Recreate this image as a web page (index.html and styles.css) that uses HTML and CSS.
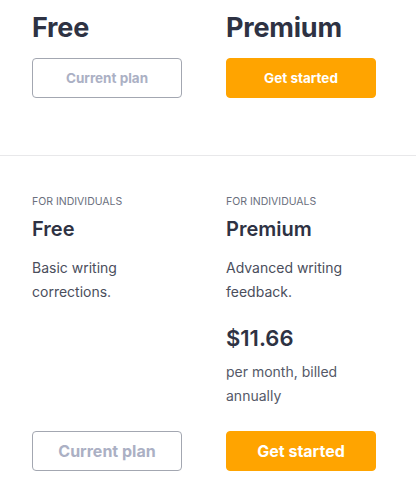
FILE: index.html
```html
<!DOCTYPE html>
<html lang="en">
<head>
<meta charset="utf-8">
<title>Plans</title>
<link rel="stylesheet" href="styles.css">
</head>
<body>
<section class="top">
  <div class="col">
    <h1 class="big-title">Free</h1>
    <button class="btn btn-outline btn-sm">Current plan</button>
  </div>
  <div class="col">
    <h1 class="big-title">Premium</h1>
    <button class="btn btn-primary btn-sm">Get started</button>
  </div>
</section>
<section class="plans">
  <div class="plan">
    <div class="label">FOR INDIVIDUALS</div>
    <h2 class="plan-title">Free</h2>
    <p class="desc">Basic writing corrections.</p>
    <button class="btn btn-outline btn-lg">Current plan</button>
  </div>
  <div class="plan">
    <div class="label">FOR INDIVIDUALS</div>
    <h2 class="plan-title">Premium</h2>
    <p class="desc">Advanced writing feedback.</p>
    <div class="price">$11.66</div>
    <p class="note">per month, billed annually</p>
    <button class="btn btn-primary btn-lg">Get started</button>
  </div>
</section>
</body>
</html>
```
FILE: styles.css
```css
* { box-sizing: border-box; }
body {
  margin: 0;
  background: #ffffff;
  font-family: Inter, "Noto Sans", sans-serif;
  color: #2e3243;
}
.top {
  display: grid;
  grid-template-columns: 150px 150px;
  column-gap: 44px;
  padding: 10px 32px 57px;
  border-bottom: 1px solid #e8e8ea;
}
.col {
  display: flex;
  flex-direction: column;
}
.big-title {
  margin: 0;
  font-size: 27px;
  line-height: 36px;
  font-weight: 700;
  color: #2e3243;
  letter-spacing: -0.2px;
}
.btn {
  display: block;
  width: 150px;
  height: 40px;
  border-radius: 4px;
  font-family: Inter, "Noto Sans", sans-serif;
  font-weight: 700;
  padding: 0;
  cursor: pointer;
}
.btn-sm { font-size: 13.5px; margin-top: 12px; }
.btn-lg { font-size: 16px; margin-top: auto; }
.btn-outline {
  background: #ffffff;
  border: 1px solid #a3a7b1;
  color: #abb0c4;
}
.btn-primary {
  background: #ffa400;
  border: 1px solid #ffa400;
  color: #ffffff;
}
.plans {
  display: grid;
  grid-template-columns: 150px 150px;
  column-gap: 44px;
  padding: 38px 32px 0;
}
.plan {
  display: flex;
  flex-direction: column;
}
.label {
  font-size: 10.5px;
  line-height: 16px;
  color: #6b6f7d;
  margin-bottom: 5px;
}
.plan-title {
  margin: 0;
  font-size: 20px;
  line-height: 28px;
  font-weight: 600;
  color: #2e3243;
}
.desc {
  margin: 13px 0 0;
  font-size: 14px;
  line-height: 24px;
  color: #4a4e5c;
  padding-right: 20px;
}
.price {
  margin-top: 19px;
  font-size: 22px;
  line-height: 30px;
  font-weight: 600;
  color: #2e3243;
}
.note {
  margin: 7px 0 23px;
  font-size: 14px;
  line-height: 24px;
  color: #555968;
}
```
